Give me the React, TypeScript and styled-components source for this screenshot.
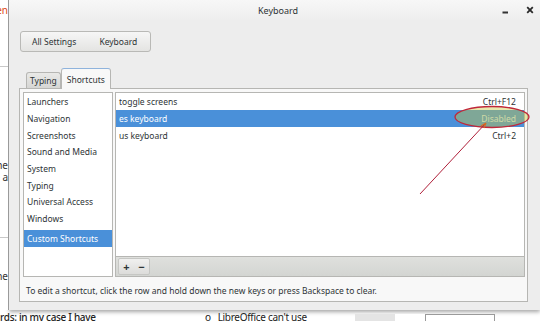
import React from 'react';
import styled, { createGlobalStyle } from 'styled-components';

const GlobalStyle = createGlobalStyle`
  html, body {
    margin: 0;
    padding: 0;
    background: #ffffff;
  }
  * {
    box-sizing: border-box;
  }
`;

const Page = styled.div`
  position: relative;
  width: 540px;
  height: 321px;
  overflow: hidden;
  display: grid;
  grid-template-columns: 9px 531px;
  grid-template-rows: 310px 11px;
  font-family: 'Noto Sans', 'Open Sans', sans-serif;
  color: #2e3436;
`;

const Gutter = styled.div`
  position: relative;
  overflow: hidden;
  background: #ffffff;
  border-right: 1px solid #9a9a9a;
  display: flex;
  flex-direction: column;
  align-items: flex-end;
  font-size: 10px;
`;

const GutterText = styled.div<{ $top: number; $color?: string }>`
  margin-top: ${p => p.$top}px;
  white-space: nowrap;
  line-height: 12px;
  color: ${p => p.$color || '#333'};
`;

const GutterRule = styled.div<{ $top: number }>`
  margin-top: ${p => p.$top}px;
  width: 100%;
  height: 1px;
  background: #c8c8c8;
`;

const Window = styled.div`
  display: flex;
  flex-direction: column;
  background: #ededed;
  box-shadow: 0 2px 4px rgba(0, 0, 0, 0.35);
  min-width: 0;
`;

const TitleBar = styled.div`
  height: 20px;
  display: flex;
  align-items: center;
  justify-content: space-between;
  padding: 0 6px 0 249px;
  background: linear-gradient(#f7f7f7, #eeeeee);
  font-size: 9px;
  color: #2e3436;
`;

const WindowButtons = styled.div`
  display: flex;
  align-items: center;
  gap: 17px;
`;

const WindowButton = styled.svg`
  display: block;
  flex: none;
`;

const Header = styled.div`
  padding: 8px 0 0 11px;
  height: 48px;
`;

const ButtonGroup = styled.div`
  display: inline-flex;
  height: 21px;
  width: 131px;
  align-items: center;
  gap: 23px;
  padding-left: 11px;
  border: 1px solid #b9b9b6;
  border-radius: 3px;
  background: linear-gradient(#f6f6f6, #e4e4e2);
  font-size: 8.5px;
  color: #2e3436;
`;

const TabsRow = styled.div`
  display: flex;
  align-items: flex-end;
  padding-left: 17px;
  height: 20px;
  position: relative;
  z-index: 1;
`;

const Tab = styled.div<{ $active?: boolean }>`
  height: ${p => (p.$active ? 21 : 16)}px;
  padding: 0 ${p => (p.$active ? 5 : 3)}px;
  display: flex;
  align-items: center;
  font-size: 8.5px;
  border: 1px solid #b6b6b3;
  border-bottom: none;
  border-top: 1px solid ${p => (p.$active ? '#8fb3dc' : '#b6b6b3')};
  border-radius: 3px 3px 0 0;
  background: ${p => (p.$active ? '#f8f8f8' : 'linear-gradient(#e9e9e7, #d6d6d4)')};
  margin-bottom: ${p => (p.$active ? -1 : 0)}px;
`;

const Notebook = styled.div`
  margin: 0 12px 0 10px;
  height: 214px;
  border: 1px solid #b6b6b3;
  background: #f8f8f8;
  padding: 3px 2px 0 3px;
  display: flex;
  flex-direction: column;
`;

const Panes = styled.div`
  display: grid;
  grid-template-columns: 90px 1fr;
  gap: 2px;
  height: 185px;
`;

const CategoryList = styled.div`
  background: #ffffff;
  border: 1px solid #b6b6b3;
  display: flex;
  flex-direction: column;
  padding-top: 0.5px;
`;

const Category = styled.div<{ $selected?: boolean; $spaced?: boolean }>`
  height: 16.7px;
  display: flex;
  align-items: center;
  padding-left: 3px;
  font-size: 8.5px;
  white-space: nowrap;
  margin-top: ${p => (p.$spaced ? 3 : 0)}px;
  background: ${p => (p.$selected ? '#4a90d9' : 'transparent')};
  color: ${p => (p.$selected ? '#ffffff' : '#2e3436')};
`;

const ShortcutPane = styled.div`
  display: flex;
  flex-direction: column;
  border: 1px solid #b6b6b3;
`;

const ShortcutList = styled.div`
  flex: 1;
  background: #ffffff;
  display: flex;
  flex-direction: column;
`;

const ShortcutRow = styled.div<{ $selected?: boolean }>`
  height: 17px;
  display: flex;
  align-items: center;
  justify-content: space-between;
  padding: 0 8px 0 3px;
  font-size: 8.5px;
  background: ${p => (p.$selected ? '#4a90d9' : 'transparent')};
  color: ${p => (p.$selected ? '#ffffff' : '#2e3436')};
`;

const Accel = styled.span<{ $disabled?: boolean }>`
  color: ${p => (p.$disabled ? '#d6e4f2' : 'inherit')};
`;

const Toolbar = styled.div`
  height: 20px;
  border-top: 1px solid #b6b6b3;
  background: linear-gradient(#dfe0dd, #d3d5d2);
  display: flex;
  align-items: center;
  padding-left: 2px;
`;

const ToolButtons = styled.div`
  display: flex;
  height: 17px;
  border: 1px solid #c6c7c4;
  border-radius: 2px;
  background: linear-gradient(#f0f0ef, #dcdcda);
`;

const ToolButton = styled.div`
  width: 15px;
  display: flex;
  align-items: center;
  justify-content: center;
  font-size: 11px;
  font-weight: bold;
  color: #2e3436;
`;

const Hint = styled.div`
  padding: 8px 0 0 3px;
  font-size: 8.5px;
  color: #2e3436;
`;

const BottomStrip = styled.div`
  grid-column: 1 / span 2;
  display: flex;
  align-items: flex-start;
  padding-top: 1px;
  font-size: 10px;
  color: #222;
  white-space: nowrap;
  overflow: hidden;
`;

const StripText = styled.span<{ $width: number; $bold?: boolean }>`
  width: ${p => p.$width}px;
  flex: none;
  line-height: 12px;
  letter-spacing: -0.3px;
  font-weight: ${p => (p.$bold ? 500 : 400)};
`;

const StripBox = styled.span<{ $width: number; $bg: string; $border?: string }>`
  width: ${p => p.$width}px;
  flex: none;
  height: 11px;
  margin-top: 3px;
  background: ${p => p.$bg};
  border: ${p => (p.$border ? `1px solid ${p.$border}` : 'none')};
  border-bottom: none;
`;

const Annotation = styled.svg`
  position: absolute;
  left: 0;
  top: 0;
  pointer-events: none;
`;

const categories = [
  'Launchers',
  'Navigation',
  'Screenshots',
  'Sound and Media',
  'System',
  'Typing',
  'Universal Access',
  'Windows',
];

const shortcuts = [
  { name: 'toggle screens', accel: 'Ctrl+F12' },
  { name: 'es keyboard', accel: 'Disabled', selected: true },
  { name: 'us keyboard', accel: 'Ctrl+2' },
];

export default function App() {
  return (
    <>
      <GlobalStyle />
      <Page>
        <Gutter>
          <GutterText $top={4} $color="#dd4814">en</GutterText>
          <GutterRule $top={50} />
          <GutterText $top={92}>che</GutterText>
          <GutterText $top={0}>e a</GutterText>
          <GutterRule $top={54} />
          <GutterText $top={32}>ne</GutterText>
        </Gutter>
        <Window>
          <TitleBar>
            <span>Keyboard</span>
            <WindowButtons>
              <WindowButton width="7" height="8" viewBox="0 0 7 8">
                <rect x="0.5" y="5.5" width="5.5" height="2" fill="#333" />
              </WindowButton>
              <WindowButton width="8" height="8" viewBox="0 0 8 8">
                <path d="M1.2 1.2 L6.8 6.8 M6.8 1.2 L1.2 6.8" stroke="#2a2a2a" strokeWidth="1.8" />
              </WindowButton>
            </WindowButtons>
          </TitleBar>
          <Header>
            <ButtonGroup>
              <span>All Settings</span>
              <span>Keyboard</span>
            </ButtonGroup>
          </Header>
          <TabsRow>
            <Tab>Typing</Tab>
            <Tab $active>Shortcuts</Tab>
          </TabsRow>
          <Notebook>
            <Panes>
              <CategoryList>
                {categories.map(c => (
                  <Category key={c}>{c}</Category>
                ))}
                <Category $selected $spaced>Custom Shortcuts</Category>
              </CategoryList>
              <ShortcutPane>
                <ShortcutList>
                  {shortcuts.map(s => (
                    <ShortcutRow key={s.name} $selected={s.selected}>
                      <span>{s.name}</span>
                      <Accel $disabled={s.selected}>{s.accel}</Accel>
                    </ShortcutRow>
                  ))}
                </ShortcutList>
                <Toolbar>
                  <ToolButtons>
                    <ToolButton>+</ToolButton>
                    <ToolButton>−</ToolButton>
                  </ToolButtons>
                </Toolbar>
              </ShortcutPane>
            </Panes>
            <Hint>To edit a shortcut, click the row and hold down the new keys or press Backspace to clear.</Hint>
          </Notebook>
        </Window>
        <BottomStrip>
          <StripText $width={205} $bold>rds: in my case I have</StripText>
          <StripText $width={150}>o&nbsp;&nbsp;&nbsp;LibreOffice can't use</StripText>
          <StripBox $width={40} $bg="#e4e4e4" />
          <StripBox $width={30} $bg="#ffffff" />
          <StripBox $width={70} $bg="#ffffff" $border="#9a9a9a" />
        </BottomStrip>
        <Annotation width="540" height="321" viewBox="0 0 540 321">
          <ellipse
            cx="492"
            cy="117"
            rx="37"
            ry="10.5"
            fill="rgba(200, 200, 60, 0.42)"
            stroke="#c0283a"
            strokeWidth="1.3"
          />
          <line x1="420" y1="194" x2="486" y2="123" stroke="#b0203a" strokeWidth="1" />
          <path d="M486 123 L481 126 M486 123 L484 128" stroke="#d86a20" strokeWidth="1.2" fill="none" />
        </Annotation>
      </Page>
    </>
  );
}
